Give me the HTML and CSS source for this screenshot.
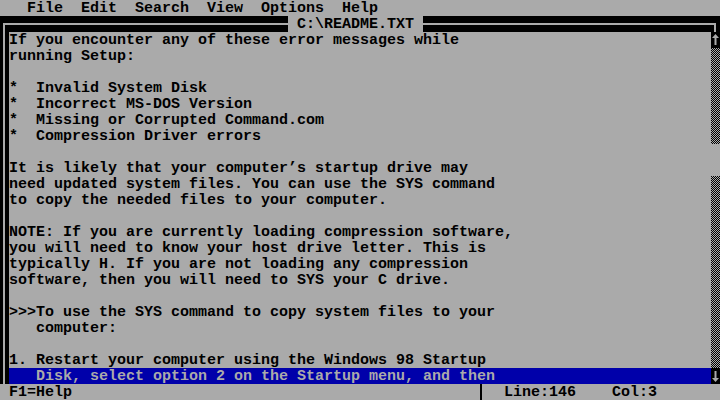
FILE: index.html
```html
<!DOCTYPE html>
<html>
<head>
<meta charset="utf-8">
<link rel="stylesheet" href="styles.css">
</head>
<body>
<div class="screen">
  <div class="menubar">   File  Edit  Search  View  Options  Help</div>
  <div class="titlebar">
    <div class="tb-left"></div>
    <div class="title"> C:\README.TXT </div>
    <div class="tb-right"></div>
  </div>
  <div class="main">
    <div class="lborder"></div>
    <div class="text">
      <div class="ln">If you encounter any of these error messages while</div>
      <div class="ln">running Setup:</div>
      <div class="ln"> </div>
      <div class="ln">*  Invalid System Disk</div>
      <div class="ln">*  Incorrect MS-DOS Version</div>
      <div class="ln">*  Missing or Corrupted Command.com</div>
      <div class="ln">*  Compression Driver errors</div>
      <div class="ln"> </div>
      <div class="ln">It is likely that your computer’s startup drive may</div>
      <div class="ln">need updated system files. You can use the SYS command</div>
      <div class="ln">to copy the needed files to your computer.</div>
      <div class="ln"> </div>
      <div class="ln">NOTE: If you are currently loading compression software,</div>
      <div class="ln">you will need to know your host drive letter. This is</div>
      <div class="ln">typically H. If you are not loading any compression</div>
      <div class="ln">software, then you will need to SYS your C drive.</div>
      <div class="ln"> </div>
      <div class="ln">&gt;&gt;&gt;To use the SYS command to copy system files to your</div>
      <div class="ln">   computer:</div>
      <div class="ln"> </div>
      <div class="ln">1. Restart your computer using the Windows 98 Startup</div>
      <div class="ln sel">   Disk, select option 2 on the Startup menu, and then</div>
    </div>
    <div class="scrollbar">
      <div class="sb-btn"><svg width="9" height="16" viewBox="0 0 9 16"><path d="M4.5 2 L1 6 H3.5 V13 H5.5 V6 H8 Z" fill="#aaaaaa"/></svg></div>
      <div class="sb-track sb-top"></div>
      <div class="sb-thumb"></div>
      <div class="sb-track sb-bottom"></div>
      <div class="sb-btn"><svg width="9" height="16" viewBox="0 0 9 16"><path d="M4.5 14 L1 10 H3.5 V3 H5.5 V10 H8 Z" fill="#aaaaaa"/></svg></div>
    </div>
  </div>
  <div class="status">
    <div class="st-left"> F1=Help</div>
    <div class="st-right">Line:146    Col:3</div>
  </div>
</div>
</body>
</html>
```
FILE: styles.css
```css
html, body {
  margin: 0;
  padding: 0;
  background: #aaaaaa;
}

.screen {
  width: 720px;
  height: 400px;
  display: flex;
  flex-direction: column;
  background: #aaaaaa;
  color: #000000;
  font-family: "Liberation Mono", "DejaVu Sans Mono", monospace;
  font-weight: bold;
  font-size: 15px;
  line-height: 18px;
  overflow: hidden;
}

.menubar {
  height: 16px;
  white-space: pre;
  background: #aaaaaa;
  color: #000;
}

.titlebar {
  height: 16px;
  display: flex;
  background: #000;
}

.tb-left {
  width: 285px;
  height: 9px;
  margin: 7px 0 0 3px;
  border-top: 2px solid #aaaaaa;
  border-left: 2px solid #aaaaaa;
  box-sizing: border-box;
}

.title {
  width: 135px;
  height: 16px;
  background: #aaaaaa;
  color: #000;
  white-space: pre;
  overflow: hidden;
}

.tb-right {
  flex: 1;
  height: 9px;
  margin: 7px 4px 0 0;
  border-top: 2px solid #aaaaaa;
  border-right: 2px solid #aaaaaa;
  box-sizing: border-box;
}

.main {
  height: 352px;
  display: flex;
}

.lborder {
  width: 9px;
  background: #000;
  box-sizing: border-box;
  padding-left: 3px;
}

.lborder::before {
  content: "";
  display: block;
  width: 2px;
  height: 100%;
  background: #aaaaaa;
}

.text {
  flex: 1;
  background: #aaaaaa;
}

.ln {
  height: 16px;
  white-space: pre;
}

.ln.sel {
  background: #0000aa;
  color: #aaaaaa;
  overflow: hidden;
}

.scrollbar {
  width: 9px;
  display: flex;
  flex-direction: column;
  background: #000;
}

.sb-btn {
  height: 16px;
  background: #000;
}

.sb-btn svg {
  display: block;
}

.sb-track {
  background-color: #000;
  background-image: repeating-conic-gradient(#000 0 25%, #aaaaaa 0 50%);
  background-size: 2px 2px;
  background-position: 1px 0;
}

.sb-top {
  height: 96px;
}

.sb-thumb {
  height: 32px;
  background: #aaaaaa;
}

.sb-bottom {
  flex: 1;
}

.status {
  height: 16px;
  display: flex;
  background: #aaaaaa;
  color: #000;
}

.st-left {
  width: 480px;
  white-space: pre;
}

.st-right {
  flex: 1;
  border-left: 2px solid #000;
  padding-left: 22px;
  white-space: pre;
}
```
